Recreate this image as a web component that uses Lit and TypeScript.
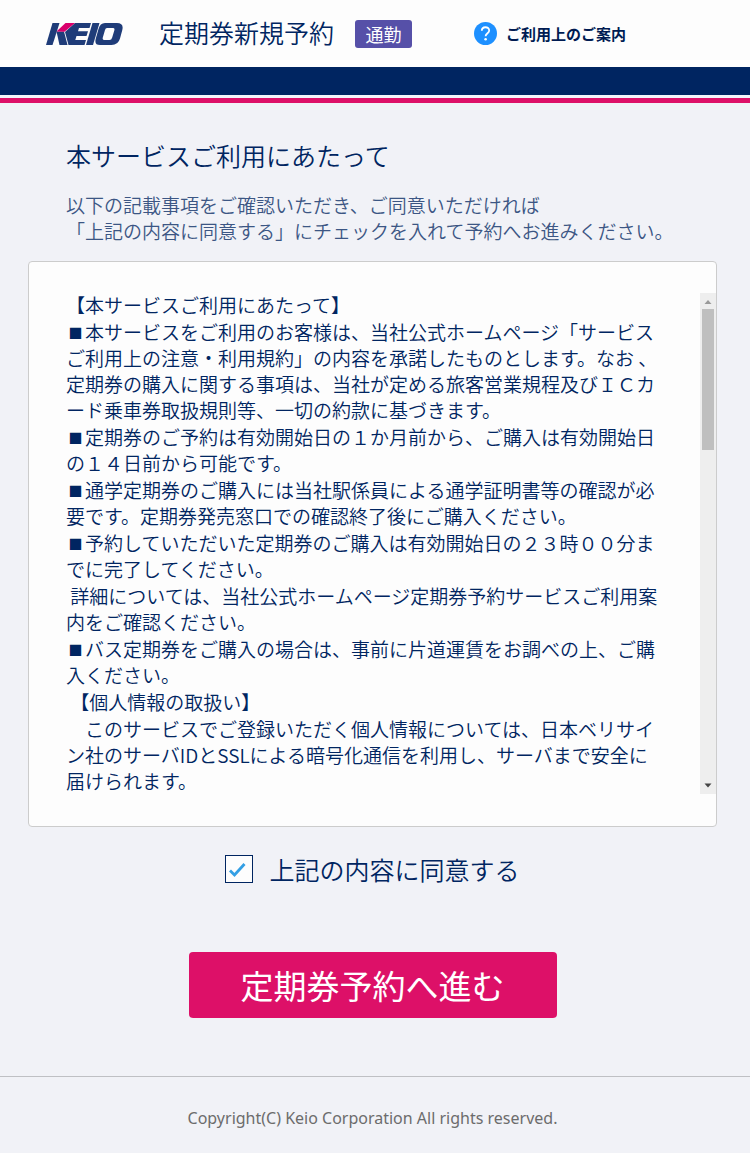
import { LitElement, html, css } from "lit";
import { customElement, state } from "lit/decorators.js";

const TERMS: string[] = [
  "【本サービスご利用にあたって】",
  "■本サービスをご利用のお客様は、当社公式ホームページ「サービスご利用上の注意・利用規約」の内容を承諾したものとします。なお 、定期券の購入に関する事項は、当社が定める旅客営業規程及びＩＣカード乗車券取扱規則等、一切の約款に基づきます。",
  "■定期券のご予約は有効開始日の１か月前から、ご購入は有効開始日の１４日前から可能です。",
  "■通学定期券のご購入には当社駅係員による通学証明書等の確認が必要です。定期券発売窓口での確認終了後にご購入ください。",
  "■予約していただいた定期券のご購入は有効開始日の２３時００分までに完了してください。",
  " 詳細については、当社公式ホームページ定期券予約サービスご利用案内をご確認ください。",
  "■バス定期券をご購入の場合は、事前に片道運賃をお調べの上、ご購入ください。",
  " 【個人情報の取扱い】",
  "　このサービスでご登録いただく個人情報については、日本ベリサイン社のサーバIDとSSLによる暗号化通信を利用し、サーバまで安全に届けられます。",
];

@customElement("app-root")
export class AppRoot extends LitElement {
  @state() private agreed = true;

  static styles = css`
    :host {
      display: block;
      min-height: 100vh;
      background: #f1f2f7;
      color: #002561;
      font-family: "Noto Sans CJK JP", sans-serif;
      font-weight: 350;
      text-spacing-trim: space-all;
    }
    * {
      box-sizing: border-box;
    }
    h1,
    h2,
    p {
      margin: 0;
      font-weight: inherit;
    }
    .header {
      display: flex;
      align-items: center;
      height: 67px;
      padding: 0 46px;
      background: #fdfdfd;
    }
    .logo {
      display: block;
      width: 77px;
      height: 22px;
      margin-right: 36px;
    }
    .title {
      padding-bottom: 4px;
      font-size: 25px;
      line-height: 36px;
    }
    .badge {
      margin-left: 21px;
      width: 57px;
      height: 28px;
      border-radius: 3px;
      background: #5650a8;
      color: #fff;
      font-size: 18px;
      font-weight: 400;
      line-height: 28px;
      text-align: center;
    }
    .guide {
      display: flex;
      align-items: center;
      gap: 9px;
      margin-left: 62px;
      color: #001b52;
      font-size: 15px;
      font-weight: 700;
      line-height: 24px;
      text-decoration: none;
      white-space: nowrap;
    }
    .guide svg {
      display: block;
      width: 23px;
      height: 23px;
    }
    .band {
      height: 36px;
      border-bottom: 5px solid #dd1068;
      background: linear-gradient(#002561 28px, #f3f5fa 28px);
    }
    .main {
      padding: 32px 33px 58px 28px;
    }
    .intro {
      padding: 0 38px;
    }
    .heading {
      font-size: 25px;
      line-height: 40px;
    }
    .lead {
      margin-top: 17px;
      color: #3c5684;
      font-size: 19px;
      line-height: 26px;
    }
    .panel {
      display: flex;
      margin-top: 17px;
      padding: 30px 0 32px;
      border: 1px solid #ccc;
      border-radius: 4px;
      background: #fdfdfd;
    }
    .terms {
      flex: 1;
      display: flex;
      flex-direction: column;
      gap: 1px;
      height: 502px;
      padding: 0 36px 0 37px;
      overflow-y: auto;
      scrollbar-width: none;
      font-size: 19px;
      line-height: 26px;
    }
    .terms p {
      white-space: pre-wrap;
    }
    .mark {
      display: inline-block;
      width: 19px;
      font-size: 14px;
      line-height: 14px;
      text-align: center;
      vertical-align: 2px;
    }
    .scrollbar {
      display: flex;
      flex-direction: column;
      width: 16px;
      margin-top: 1px;
      padding: 0 2px;
      background: #eee;
    }
    .arrow {
      display: block;
      width: 12px;
      height: 16px;
    }
    .thumb {
      height: 141px;
      margin-bottom: auto;
      background: #bfbfbf;
    }
    .agree {
      display: flex;
      align-items: center;
      justify-content: center;
      gap: 16px;
      margin-top: 24px;
      font-size: 25px;
      line-height: 36px;
    }
    .check {
      appearance: none;
      flex: none;
      width: 28px;
      height: 28px;
      margin: 0;
      border: 1px solid #002561;
      background: #fdfdfd;
    }
    .check:checked {
      background: #fdfdfd
        url("data:image/svg+xml,%3Csvg xmlns='http://www.w3.org/2000/svg' viewBox='0 0 26 26'%3E%3Cpath d='M4 14.500l4.500 4.500L18.500 8' fill='none' stroke='%23339fe4' stroke-width='2.8'/%3E%3C/svg%3E")
        center / 26px 26px no-repeat;
    }
    .submit {
      display: block;
      width: 368px;
      max-width: 100%;
      height: 66px;
      margin: 65px auto 0;
      padding: 0;
      border: 0;
      border-radius: 4px;
      background: #dd1068;
      color: #fff;
      font: inherit;
      font-size: 33px;
      font-weight: 400;
      line-height: 64px;
    }
    .footer {
      padding: 29px 0 23px;
      border-top: 1px solid #bfc0c4;
      color: #6c6c6c;
      font-family: "Noto Sans", sans-serif;
      font-size: 16px;
      font-weight: 400;
      line-height: 24px;
      text-align: center;
    }
    .footer p {
      padding-right: 5px;
    }
  `;

  private renderTerm(text: string) {
    return text.startsWith("■")
      ? html`<p><span class="mark">■</span>${text.slice(1)}</p>`
      : html`<p>${text}</p>`;
  }

  render() {
    return html`
      <header class="header">
        <svg class="logo" viewBox="0 0 77 22" role="img" aria-label="KEIO">
          <g fill="#1f3c79">
            <path d="M6.500 0H13.500L11 8L6.500 22H0Z" />
            <path d="M10.500 8.500H18L21.500 22H13.500Z" />
            <path d="M29 0H45L43.500 5H33L32 8.300H42L40.500 13H30.500L29.300 17H40L38.500 22H22.500L19 9Z" />
            <path d="M46.500 0H53.500L47 22H40Z" />
            <path
              fill-rule="evenodd"
              d="M59 0H71Q78 0 76.300 7L74 15.500Q72.200 22 65.500 22H54Q48 22 49.800 15.500L52.500 6Q54 0 59 0ZM61 5Q59.500 5 59 7L56.800 14.500Q56.200 17 58 17H63.500Q65.500 17 66.200 14.500L68.300 7.500Q69 5 67 5Z"
            />
          </g>
          <path fill="#d9006c" d="M19.500 0H29L18.500 8.800L10.500 8.500Z" />
        </svg>
        <h1 class="title">定期券新規予約</h1>
        <span class="badge">通勤</span>
        <a class="guide" href="#guide">
          <svg viewBox="0 0 23 23" aria-hidden="true">
            <circle cx="11.5" cy="11.5" r="11.5" fill="#1e90ff" />
            <path d="M7.800 8.800C7.800 4 15.200 4.200 15.200 8.500C15.200 11.200 11.600 11.200 11.600 14.300" fill="none" stroke="#fff" stroke-width="1.8" />
            <circle cx="11.600" cy="17.300" r="1.300" fill="#fff" />
          </svg>
          <span>ご利用上のご案内</span>
        </a>
      </header>
      <div class="band"></div>
      <main class="main">
        <div class="intro">
          <h2 class="heading">本サービスご利用にあたって</h2>
          <p class="lead">
            以下の記載事項をご確認いただき、ご同意いただければ<br />「上記の内容に同意する」にチェックを入れて予約へお進みください。
          </p>
        </div>
        <section class="panel">
          <div class="terms" tabindex="0">${TERMS.map((t) => this.renderTerm(t))}</div>
          <div class="scrollbar" aria-hidden="true">
            <svg class="arrow" viewBox="0 0 12 16"><path d="M2.500 11L6 7L9.500 11Z" fill="#9a9a9a" /></svg>
            <div class="thumb"></div>
            <svg class="arrow" viewBox="0 0 12 16"><path d="M2.500 5.500L6 9.500L9.500 5.500Z" fill="#444" /></svg>
          </div>
        </section>
        <label class="agree">
          <input
            class="check"
            type="checkbox"
            .checked=${this.agreed}
            @change=${(e: Event) => (this.agreed = (e.target as HTMLInputElement).checked)}
          />
          <span>上記の内容に同意する</span>
        </label>
        <button class="submit" type="button">定期券予約へ進む</button>
      </main>
      <footer class="footer"><p>Copyright(C) Keio Corporation All rights reserved.</p></footer>
    `;
  }
}
